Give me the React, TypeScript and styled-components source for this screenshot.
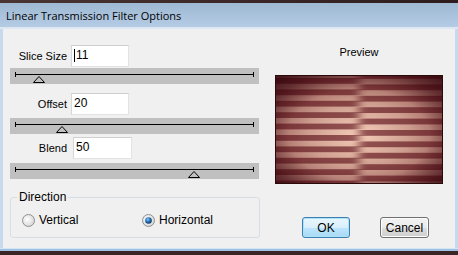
import styled, { createGlobalStyle } from "styled-components";

const GlobalStyle = createGlobalStyle`
  html, body {
    margin: 0;
    padding: 0;
    background: #3a2626;
  }
  #root {
    width: 458px;
    height: 255px;
    overflow: hidden;
  }
`;

const Window = styled.div`
  width: 458px;
  height: 255px;
  display: flex;
  flex-direction: column;
  background: #3a2626;
`;

const TopEdge = styled.div`
  height: 3px;
  background: linear-gradient(to right, #4a3434, #2e1c1c);
`;

const TitleBar = styled.div`
  height: 24px;
  display: flex;
  align-items: center;
  padding-left: 6px;
  background: linear-gradient(to bottom, #9fb9d3, #b4cbe4);
  border-bottom: 2px solid #dce7f3;
  font-family: "Open Sans", "Liberation Sans", sans-serif;
  font-size: 11px;
  color: #000;
`;

const Frame = styled.div`
  flex: 1;
  display: flex;
  background: #c7d9ec;
  padding: 0 3px 0 3px;
`;

const Body = styled.div`
  flex: 1;
  display: flex;
  background: #f0f0f0;
  font-family: "Liberation Sans", Arial, sans-serif;
  font-size: 11px;
  color: #000;
`;

const BottomEdge = styled.div`
  height: 7px;
  background: linear-gradient(to bottom, #d5e4f2 0, #d5e4f2 1px, #9ec2e6 1px, #9ec2e6 3px, #3a2424 3px);
`;

const LeftPanel = styled.div`
  width: 260px;
  padding: 16px 0 0 7px;
  display: flex;
  flex-direction: column;
`;

const FieldRow = styled.div<{ $labelWidth: number; $inputLeft: number; $top: number }>`
  display: flex;
  align-items: center;
  height: 22px;
  margin-top: ${(p) => p.$top}px;
  label {
    width: ${(p) => p.$labelWidth}px;
    text-align: right;
    margin-right: ${(p) => p.$inputLeft}px;
  }
`;

const TextBox = styled.div<{ $width: number }>`
  width: ${(p) => p.$width}px;
  height: 22px;
  box-sizing: border-box;
  background: #fff;
  border: 1px solid #e3e3e3;
  border-top-color: #cfcfcf;
  border-left-color: #d6d6d6;
  font-size: 12px;
  padding: 2px 0 0 2px;
  display: flex;
  align-items: flex-start;
`;

const Caret = styled.span`
  display: inline-block;
  width: 1px;
  height: 13px;
  background: #000;
  margin-right: 1px;
  margin-top: 1px;
`;

const Slider = styled.div<{ $top: number }>`
  position: relative;
  width: 249px;
  height: 16px;
  margin-top: ${(p) => p.$top}px;
  background: #c0c0c0;
`;

const Track = styled.div`
  position: absolute;
  left: 5px;
  right: 5px;
  top: 6px;
  height: 1px;
  background: #000;
  &::before,
  &::after {
    content: "";
    position: absolute;
    top: -2px;
    width: 1px;
    height: 5px;
    background: #000;
  }
  &::before {
    left: 0;
  }
  &::after {
    right: 0;
  }
`;

const Thumb = styled.svg`
  position: absolute;
  top: 8px;
`;

const GroupBox = styled.div`
  position: relative;
  margin-top: 18px;
  width: 250px;
  height: 41px;
  box-sizing: border-box;
  border: 1px solid #d5dfe5;
  border-radius: 3px;
  padding: 15px 0 0 11px;
  display: flex;
  align-items: flex-start;
`;

const Legend = styled.span`
  position: absolute;
  left: 6px;
  top: -8px;
  padding: 0 2px;
  background: #f0f0f0;
  font-size: 12px;
`;

const RadioOption = styled.div<{ $width: number }>`
  display: flex;
  align-items: center;
  width: ${(p) => p.$width}px;
  font-size: 12px;
  gap: 4px;
`;

const RightPanel = styled.div`
  flex: 1;
  display: flex;
  flex-direction: column;
  align-items: flex-start;
  padding: 16px 0 0 5px;
`;

const PreviewLabel = styled.div`
  width: 168px;
  text-align: center;
  font-size: 11px;
  margin-top: 1px;
`;

const PreviewBox = styled.div`
  margin-top: 17px;
  width: 168px;
  height: 109px;
  line-height: 0;
`;

const ButtonRow = styled.div`
  display: flex;
  gap: 30px;
  margin: 33px 0 0 27px;
`;

const Button = styled.div<{ $focused?: boolean }>`
  width: ${(p) => (p.$focused ? 48 : 49)}px;
  height: 21px;
  box-sizing: border-box;
  border-radius: 3px;
  border: 1px solid ${(p) => (p.$focused ? "#3c7fb1" : "#707070")};
  background: ${(p) =>
    p.$focused
      ? "linear-gradient(to bottom, #eaf6fd 0%, #d9f0fc 50%, #bee6fd 51%, #a7d9f5 100%)"
      : "linear-gradient(to bottom, #f2f2f2 0%, #ebebeb 50%, #dddddd 51%, #cfcfcf 100%)"};
  box-shadow: inset 0 0 0 1px ${(p) => (p.$focused ? "#aee3f7" : "#fcfcfc")};
  display: flex;
  align-items: center;
  justify-content: center;
  font-size: 12px;
`;

function SliderBar({ top, thumb }: { top: number; thumb: number }) {
  return (
    <Slider $top={top}>
      <Track />
      <Thumb width="12" height="7" viewBox="0 0 12 7" style={{ left: thumb - 6 }}>
        <path d="M6 0.5 L11.5 6.5 L0.5 6.5 Z" fill="none" stroke="#000" strokeWidth="1" />
      </Thumb>
    </Slider>
  );
}

function Radio({ checked }: { checked?: boolean }) {
  const id = checked ? "rOn" : "rOff";
  return (
    <svg width="13" height="13" viewBox="0 0 13 13">
      <defs>
        <radialGradient id={id} cx="0.4" cy="0.4" r="0.6">
          <stop offset="0" stopColor="#ffffff" />
          <stop offset="1" stopColor="#d8d8d8" />
        </radialGradient>
        <radialGradient id="dot" cx="0.4" cy="0.35" r="0.6">
          <stop offset="0" stopColor="#8fc7ef" />
          <stop offset="0.6" stopColor="#1f6fb5" />
          <stop offset="1" stopColor="#0e3d6e" />
        </radialGradient>
      </defs>
      <circle cx="6.5" cy="6.5" r="6" fill={`url(#${id})`} stroke="#8e8f8f" />
      {checked && <circle cx="6.5" cy="6.5" r="3.3" fill="url(#dot)" />}
    </svg>
  );
}

function Preview() {
  const period = 11.4;
  const rows = Array.from({ length: 11 }, (_, i) => i);
  return (
    <svg width="168" height="109" viewBox="0 0 168 109">
      <defs>
        <radialGradient id="glow" cx="0.5" cy="0.55" r="0.6">
          <stop offset="0" stopColor="#f6ceba" />
          <stop offset="0.5" stopColor="#d8a898" />
          <stop offset="1" stopColor="#a0605c" />
        </radialGradient>
        <radialGradient id="shade" cx="0.5" cy="0.55" r="0.7">
          <stop offset="0" stopColor="#2a0008" stopOpacity="0" />
          <stop offset="0.6" stopColor="#2a0008" stopOpacity="0.08" />
          <stop offset="1" stopColor="#2a0008" stopOpacity="0.75" />
        </radialGradient>
        <filter id="hblur" x="-0.1" y="-0.1" width="1.2" height="1.2">
          <feGaussianBlur stdDeviation="4 0.3" />
        </filter>
      </defs>
      <rect width="168" height="109" fill="url(#glow)" />
      <g filter="url(#hblur)" opacity="0.62">
        {rows.map((i) => (
          <rect key={"l" + i} x="-10" y={3 + i * period} width="94" height="5.8" fill="#5c1018" />
        ))}
        {rows.map((i) => (
          <rect key={"r" + i} x="84" y={-2 + i * period} width="94" height="5.8" fill="#5c1018" />
        ))}
      </g>
      <rect width="168" height="109" fill="url(#shade)" />
      <rect x="0.5" y="0.5" width="167" height="108" fill="none" stroke="#2a0a0a" />
    </svg>
  );
}

export default function App() {
  return (
    <>
      <GlobalStyle />
      <Window>
        <TopEdge />
        <TitleBar>Linear Transmission Filter Options</TitleBar>
        <Frame>
          <Body>
            <LeftPanel>
              <FieldRow $labelWidth={57} $inputLeft={4} $top={0}>
                <label>Slice Size</label>
                <TextBox $width={58}>
                  <Caret />
                  11
                </TextBox>
              </FieldRow>
              <SliderBar top={1} thumb={29} />
              <FieldRow $labelWidth={57} $inputLeft={4} $top={9}>
                <label>Offset</label>
                <TextBox $width={58}>20</TextBox>
              </FieldRow>
              <SliderBar top={3} thumb={52} />
              <FieldRow $labelWidth={57} $inputLeft={6} $top={3}>
                <label>Blend</label>
                <TextBox $width={59}>50</TextBox>
              </FieldRow>
              <SliderBar top={4} thumb={184} />
              <GroupBox>
                <Legend>Direction</Legend>
                <RadioOption $width={120}>
                  <Radio />
                  Vertical
                </RadioOption>
                <RadioOption $width={100}>
                  <Radio checked />
                  Horizontal
                </RadioOption>
              </GroupBox>
            </LeftPanel>
            <RightPanel>
              <PreviewLabel>Preview</PreviewLabel>
              <PreviewBox>
                <Preview />
              </PreviewBox>
              <ButtonRow>
                <Button $focused>OK</Button>
                <Button>Cancel</Button>
              </ButtonRow>
            </RightPanel>
          </Body>
        </Frame>
        <BottomEdge />
      </Window>
    </>
  );
}
